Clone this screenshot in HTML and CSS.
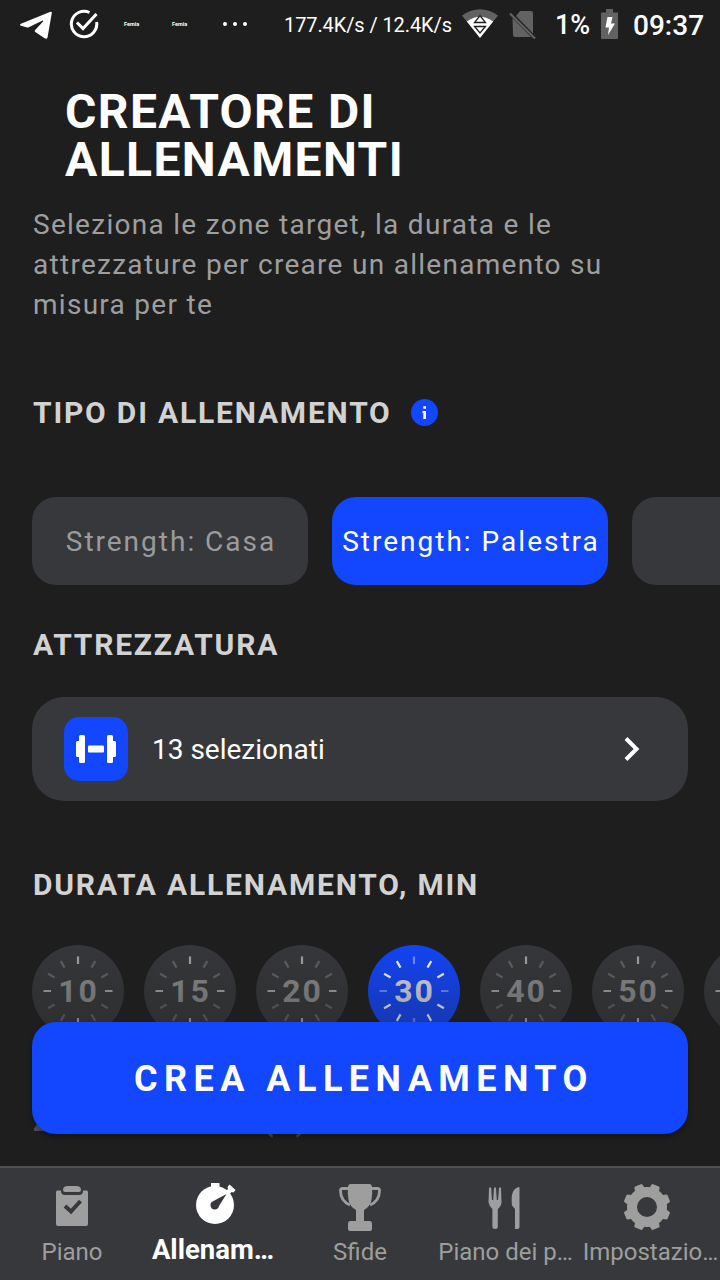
FILE: index.html
```html
<!DOCTYPE html>
<html lang="it">
<head>
    <meta charset="UTF-8">
    <meta name="viewport" content="width=device-width, initial-scale=1.0">
    <title>Creatore di allenamenti</title>
    <link rel="stylesheet" href="styles.css">
</head>
<body>
    <div class="status-bar">
        <svg class="icon-telegram" width="32" height="28" viewBox="0 0 32 28"><path fill="#fff" d="M30.500 .8c1-.4 1.500.2 1.300 1.200L27.600 26c-.3 1.700-1.400 2.200-2.900 1.300l-9.400-6.200c-.8-.6-.8-1.300-.1-2L23 10.500c.6-.7-.1-1.200-.9-.7L8.800 16.200c-.8.4-1.500.4-2.400.1L.9 14.700c-1.200-.4-1.200-1.300 0-1.900z"/></svg>
        <svg class="icon-check" width="30" height="30" viewBox="0 0 30 30" fill="none" stroke="#fff" stroke-width="3"><path d="M20.500 3.500A12.700 12.700 0 1 0 27.600 13"/><path d="M8 13.500l6 6L27.500 5"/></svg>
        <span class="notif notif-first">Femia</span>
        <span class="notif">Femia</span>
        <svg class="icon-dots" width="26" height="6" viewBox="0 0 26 6" fill="#fff"><circle cx="3" cy="3" r="2"/><circle cx="13" cy="3" r="2"/><circle cx="23" cy="3" r="2"/></svg>
        <span class="speed">177.4K/s / 12.4K/s</span>
        <svg class="icon-wifi" width="36" height="30" viewBox="0 0 36 30">
            <path fill="#626262" d="M0 6.500Q18-6 36 6.500L31.200 12.500H4.800z"/>
            <path fill="#fff" d="M4.800 12.500Q18 3 31.200 12.500L18 29z"/>
            <path fill="#fff" stroke="#1e1e1e" stroke-width="1.300" d="M12.500 13.500h11L18 6.500zM12.500 17.500h11L18 24z"/>
        </svg>
        <svg class="icon-sim" width="27" height="28" viewBox="0 0 27 28"><path fill="#626262" d="M11 0h11q2 0 2 2v20.500L7 5zM3.500 7L22 26H6q-2 0-2-2z"/><path stroke="#626262" stroke-width="2.200" d="M1 2.500l25 25"/></svg>
        <span class="percent">1%</span>
        <svg class="icon-battery" width="17" height="30" viewBox="0 0 17 30"><path fill="#626262" d="M5 0h7v3.500h5V29q0 1-1 1H1q-1 0-1-1V3.500h5z"/><path fill="#fff" d="M6.500 8h5L10 14.500h4L7 26l1-7.500H4.500z"/></svg>
        <span class="clock">09:37</span>
    </div>

    <main>
        <h1>CREATORE DI<br>ALLENAMENTI</h1>
        <p class="intro">Seleziona le zone target, la durata e le<br>attrezzature per creare un allenamento su<br>misura per te</p>

        <h2 class="type-title">TIPO DI ALLENAMENTO
            <svg class="info" width="27" height="27" viewBox="0 0 27 27"><circle cx="13.500" cy="13.500" r="13.500" fill="#1246ff"/><path fill="#fff" d="M12.300 7.300H15v2.400h-2.700zM11.500 12H15v8h-2.700v-6h-.8z"/></svg>
        </h2>
        <div class="chips">
            <div class="chip">Strength: Casa</div>
            <div class="chip selected">Strength: Palestra</div>
            <div class="chip"></div>
        </div>

        <h2 class="equipment-title">ATTREZZATURA</h2>
        <div class="equipment">
            <div class="equipment-icon">
                <svg width="40" height="28" viewBox="0 0 40 28" fill="#fff"><rect x="3" y="0" width="6" height="28" rx="1.500"/><rect x="0" y="6" width="6" height="16" rx="1.500"/><rect x="12" y="10.500" width="16" height="7" rx="1"/><rect x="31" y="0" width="6" height="28" rx="1.500"/><rect x="34" y="6" width="6" height="16" rx="1.500"/></svg>
            </div>
            <span>13 selezionati</span>
            <svg class="arrow" width="16" height="26" viewBox="0 0 16 26"><path d="M2 2.500L12.500 13 2 23.500" fill="none" stroke="#fff" stroke-width="4"/></svg>
        </div>

        <h2 class="duration-title">DURATA ALLENAMENTO, MIN</h2>
        <svg class="defs" width="0" height="0">
            <symbol id="ticks" viewBox="0 0 92 92">
                <g class="main-ticks"><path d="M46 11.500v7.500M46 73v7.500M11.500 46H19M73 46h7.500"/></g>
                <g class="minor-ticks"><path d="M28.800 16.100l3.700 6.500M63.200 16.100l-3.700 6.500M16.100 28.800l6.500 3.700M75.900 28.800l-6.500 3.700M16.100 63.200l6.500-3.700M75.900 63.200l-6.500-3.700M28.800 75.900l3.700-6.500M63.200 75.900l-3.700-6.500"/></g>
            </symbol>
        </svg>
        <div class="dials">
            <div class="dial"><svg><use href="#ticks"/></svg><span>10</span></div>
            <div class="dial"><svg><use href="#ticks"/></svg><span>15</span></div>
            <div class="dial"><svg><use href="#ticks"/></svg><span>20</span></div>
            <div class="dial selected"><svg><use href="#ticks"/></svg><span>30</span></div>
            <div class="dial"><svg><use href="#ticks"/></svg><span>40</span></div>
            <div class="dial"><svg><use href="#ticks"/></svg><span>50</span></div>
            <div class="dial"><svg><use href="#ticks"/></svg></div>
        </div>

        <h2 class="zones-title">ZONE TARGET (0)</h2>

        <!-- button floating over the scrolling content -->
        <div class="create-bar">
            <button type="button">CREA ALLENAMENTO</button>
        </div>
    </main>

    <nav>
        <a class="tab">
            <svg width="48" height="48" viewBox="0 0 48 48"><path fill="#9e9e9e" d="M9.500 7.500H13v.5q0 4 4 4h14q4 0 4-4v-.5h3.500Q40 7.500 40 9v32q0 2-2 2H10q-2 0-2-2V9q0-1.500 1.500-1.500z"/><path fill="#9e9e9e" d="M20 3h8q5 0 5 4 0 2-2 2H17q-2 0-2-2 0-4 5-4z"/><path d="M17 23l6 5.500L32.500 18" fill="none" stroke="#37383b" stroke-width="4"/></svg>
            <span>Piano</span>
        </a>
        <a class="tab active">
            <svg width="48" height="48" viewBox="0 0 48 48"><circle cx="23" cy="22" r="19" fill="#fff"/><path fill="#fff" d="M19 0h8.500v6H19zM37.500 1.500l6 5.500-2 2.500-2-.5-3.500 4-3.500-3 3.500-4-.5-2z"/><path fill="#37383b" d="M34.500 11L27 23a4.300 4.300 0 1 1-5.500-5z"/></svg>
            <span>Allenam…</span>
        </a>
        <a class="tab">
            <svg width="48" height="48" viewBox="0 0 48 48"><path fill="#9e9e9e" d="M14.500 1h19q2 0 2.300 2 1 7-.3 14-1.500 7-7.500 10v11h5.500q2.500 0 2.500 3v5q0 2-2 2H14q-2 0-2-2v-5q0-3 2.500-3H20V27q-6-3-7.500-10-1.300-7-.3-14 .3-2 2.300-2z"/><path d="M13 5.500H6.500q-2 0-2 2C4.500 15 8 19.500 14 22M35 5.500h6.500q2 0 2 2C43.500 15 40 19.500 34 22" fill="none" stroke="#9e9e9e" stroke-width="2.800"/></svg>
            <span>Sfide</span>
        </a>
        <a class="tab meal">
            <svg width="48" height="48" viewBox="0 0 48 48"><path fill="#9e9e9e" d="M9 5q1.500-1.500 2.200 0l.8 12h1.200L14 5q1-1.500 2 0l.8 12H18l1-12q1-1.500 2 0l.5 14q0 4-3.700 7v18q0 2-2.700 2t-2.700-2V26Q9 23 8.500 19zM39.500 4v40q0 2-2 2H35V26l-3-3.500C31 13 32 5 39.500 4z"/></svg>
            <span>Piano dei p…</span>
        </a>
        <a class="tab settings">
            <svg width="48" height="48" viewBox="-24 -24 48 48">
                <circle r="15" fill="none" stroke="#9e9e9e" stroke-width="10"/>
                <g fill="#9e9e9e">
                    <path id="tooth" d="M-5.500-17l1.200-5.500q.3-1 1.300-1h6q1 0 1.300 1L5.500-17z" transform="rotate(22.500)"/>
                    <use href="#tooth" transform="rotate(45)"/><use href="#tooth" transform="rotate(90)"/><use href="#tooth" transform="rotate(135)"/><use href="#tooth" transform="rotate(180)"/><use href="#tooth" transform="rotate(225)"/><use href="#tooth" transform="rotate(270)"/><use href="#tooth" transform="rotate(315)"/>
                </g>
            </svg>
            <span>Impostazio…</span>
        </a>
    </nav>
</body>
</html>
```
FILE: styles.css
```css
* {
    box-sizing: border-box;
}

body {
    margin: 0;
    height: 1280px;
    display: flex;
    flex-direction: column;
    overflow: hidden;
    background-color: #1e1e1e;
    color: #fff;
    font-family: Roboto, sans-serif;
}

svg {
    display: block;
    flex: none;
}

/* Status bar */
.status-bar {
    display: flex;
    align-items: center;
    height: 50px;
    padding-left: 20px;
    white-space: nowrap;
}

.icon-check {
    margin-left: 17px;
    margin-top: -2px;
}

.notif {
    width: 15px;
    margin-left: 33px;
    margin-top: -2px;
    font-size: 5.5px;
    font-weight: 700;
}

.notif-first {
    margin-left: 25px;
}

.icon-dots {
    margin-left: 35px;
    margin-top: -2px;
}

.speed {
    width: 179px;
    margin-left: 36px;
    font-size: 20px;
    letter-spacing: -0.1px;
}

.icon-wifi {
    margin-left: -1px;
    margin-top: -3px;
}

.icon-sim {
    margin-left: 11px;
    margin-top: -1px;
}

.percent {
    width: 46px;
    margin-left: 19px;
    font-size: 27px;
    font-weight: 500;
}

.icon-battery {
    margin-top: -2px;
}

.clock {
    margin-left: 15px;
    font-size: 28px;
    font-weight: 500;
}

/* Content */
main {
    position: relative;
    flex: none;
    height: 1116px;
    overflow: hidden;
    padding: 38px 32px 0;
}

h1 {
    margin: 0 0 21px 33px;
    font-size: 48px;
    line-height: 48px;
    font-weight: 700;
    letter-spacing: 1.4px;
}

.intro {
    margin: 0 0 70px 1px;
    font-size: 28px;
    line-height: 40px;
    letter-spacing: 1.28px;
    color: #9e9e9e;
    white-space: nowrap;
}

h2 {
    margin: 0 0 0 1px;
    height: 36px;
    font-size: 30px;
    line-height: 36px;
    font-weight: 700;
    letter-spacing: 1.8px;
    color: #d2d2d2;
    white-space: nowrap;
}

.type-title {
    display: flex;
    align-items: center;
    gap: 19px;
}

.info {
    margin-top: -1px;
}

.chips {
    display: flex;
    gap: 24px;
    margin: 66px 0 42px;
}

.chip {
    flex: none;
    display: flex;
    align-items: center;
    justify-content: center;
    width: 276px;
    height: 88px;
    padding-left: 2px;
    border-radius: 24px;
    background-color: #37383b;
    color: #9b9b9d;
    font-size: 28px;
    letter-spacing: 2px;
    white-space: nowrap;
}

.chip.selected {
    background-color: #1246ff;
    color: #fff;
}

.equipment {
    display: flex;
    align-items: center;
    height: 104px;
    margin: 34px 0 66px;
    padding: 0 48px 0 32px;
    border-radius: 32px;
    background-color: #37383b;
    font-size: 28px;
}

.equipment-icon {
    display: flex;
    align-items: center;
    justify-content: center;
    width: 64px;
    height: 64px;
    margin-right: 24px;
    border-radius: 15px;
    background-color: #1246ff;
}

.arrow {
    margin-left: auto;
}

.defs {
    height: 0;
}

.dials {
    display: flex;
    gap: 20px;
    margin: 42px 0 66px;
}

.dial {
    flex: none;
    display: grid;
    place-items: center;
    width: 92px;
    height: 92px;
    border-radius: 50%;
    background-color: #37383b;
    color: #8e8e8f;
    font-size: 32px;
    font-weight: 700;
    letter-spacing: 2px;
}

.dial svg,
.dial span {
    grid-area: 1 / 1;
}

.dial span {
    padding-left: 1px;
}

.dial svg {
    width: 92px;
    height: 92px;
    fill: none;
    stroke: #a8a8a8;
    stroke-width: 2.2;
    --minor: 0.4;
    --main: 1;
}

.dial.selected {
    background-color: #1246ff;
    color: #e0e0e6;
}

.dial.selected svg {
    stroke: #fff;
    --minor: 1;
    --main: 0.4;
}

.main-ticks {
    opacity: var(--main);
}

.minor-ticks {
    opacity: var(--minor);
}

.zones-title {
    letter-spacing: 2.3px;
}

.create-bar {
    position: absolute;
    left: 0;
    right: 0;
    bottom: 0;
    height: 236px;
    padding: 92px 32px 32px;
    background: linear-gradient(rgba(30, 30, 30, 0) 0, rgba(30, 30, 30, 0.85) 100%);
}

.create-bar button {
    width: 100%;
    height: 112px;
    padding: 2px 0 0 8px;
    border: none;
    border-radius: 24px;
    background-color: #1246ff;
    box-shadow: 0 3px 5px rgba(0, 0, 0, 0.35);
    color: #fff;
    font-family: inherit;
    font-size: 36px;
    font-weight: 700;
    letter-spacing: 6.45px;
}

/* Bottom navigation */
nav {
    display: flex;
    height: 114px;
    border-top: 2px solid #514f50;
    background-color: #37383b;
}

.tab {
    width: 144px;
    display: flex;
    flex-direction: column;
    align-items: center;
    padding-top: 15px;
    color: #9e9e9e;
    font-size: 24px;
    line-height: 28px;
    white-space: nowrap;
}

.tab span {
    margin-top: 7px;
}

.tab.active {
    color: #fff;
    font-size: 27.5px;
    font-weight: 700;
}

.tab.active span {
    margin: 5px 6px 0 0;
}

.tab.meal span {
    padding-left: 3px;
}

.tab.settings svg {
    margin-right: 2px;
}

.tab.settings span {
    padding-left: 5px;
}
```
